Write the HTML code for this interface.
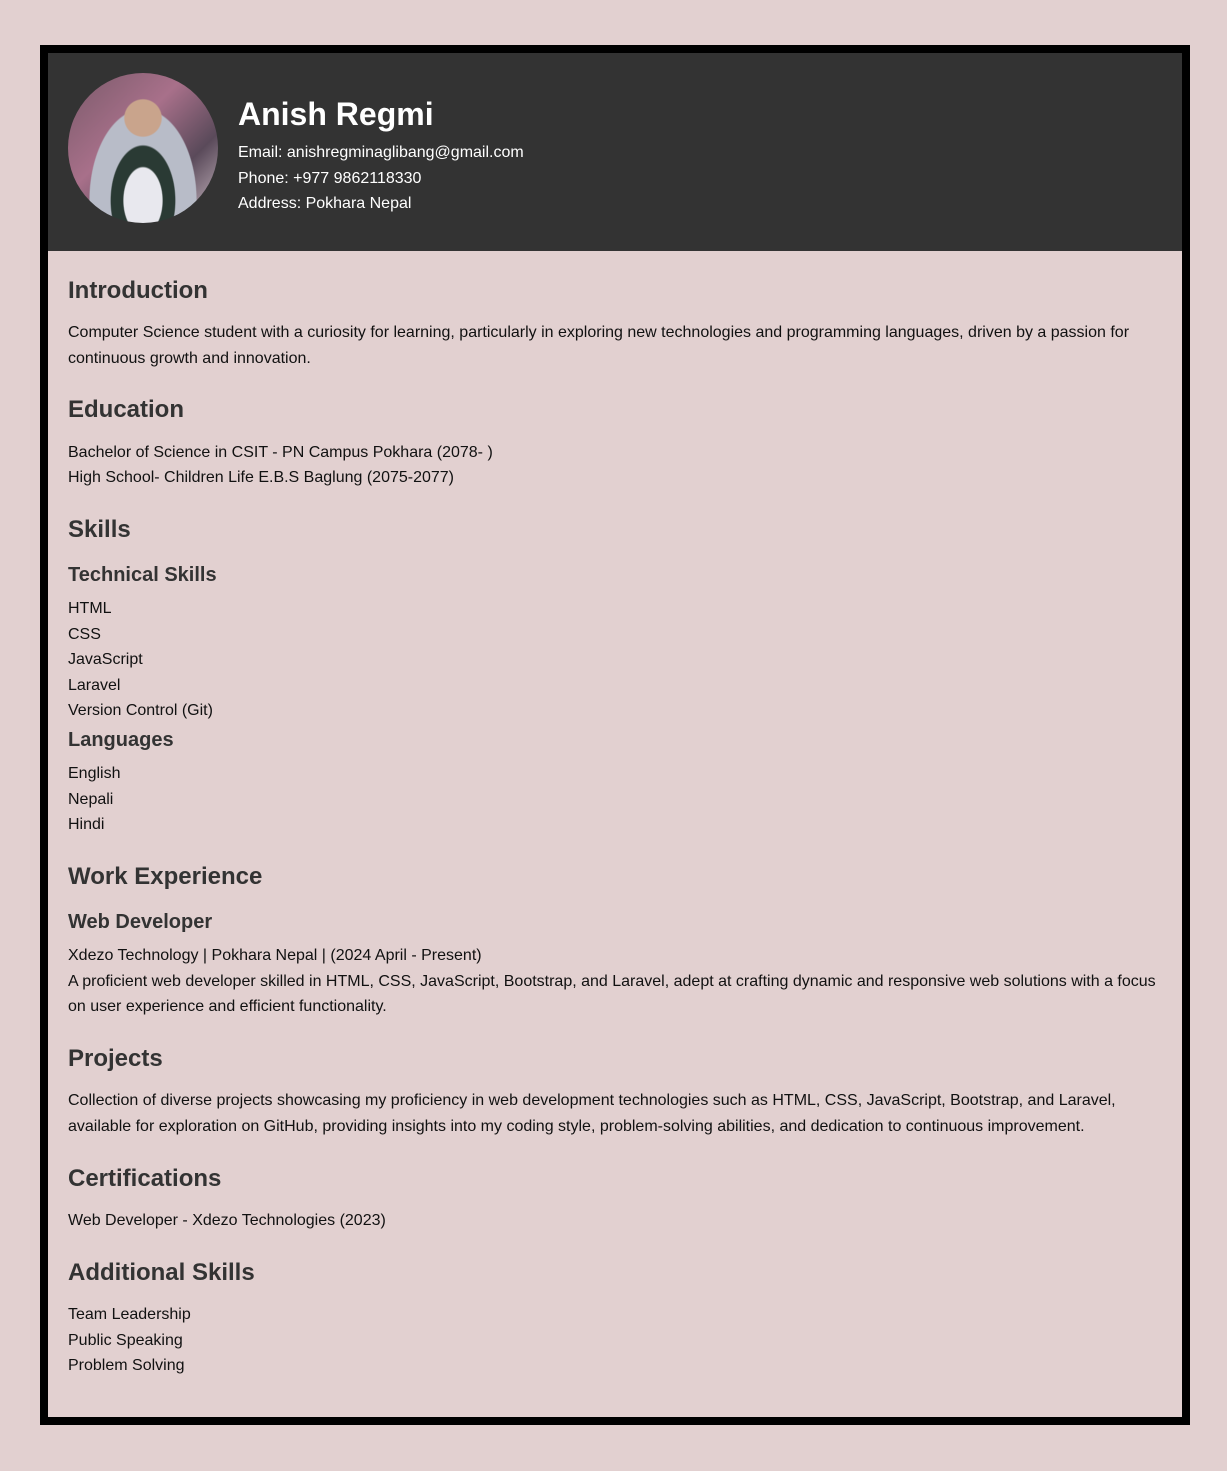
<!DOCTYPE html>
<html><head><meta charset="utf-8"><style>
html,body{margin:0;padding:0}
body{width:1227px;height:1471px;background:#e2d0d0;position:relative;font-family:"Liberation Sans",Arial,sans-serif;overflow:hidden}
.box{position:absolute;left:40px;top:45px;width:1134px;height:1364px;border:8px solid #000;}
.hdr{position:absolute;left:48px;top:53px;width:1134px;height:198px;background:#333}
.av{position:absolute;left:68px;top:73px;width:150px;height:150px;border-radius:50%;overflow:hidden;
background:radial-gradient(circle at 50% 30%,#c9a48c 0 14%,transparent 15%),radial-gradient(ellipse at 50% 85%,#e8e8ee 0 18%,#2a3a34 19% 30%,#b8bcc8 31% 50%,transparent 51%),linear-gradient(135deg,#7a5a6a,#a8708a 40%,#5a4a5a 70%,#d0c0c8)}
.a{position:absolute;left:68px;white-space:nowrap}
.h2{font-size:24px;line-height:28px;font-weight:bold;color:#333}
.h3{font-size:20px;line-height:24px;font-weight:bold;color:#333}
.p{font-size:16px;line-height:25.6px;color:#111}
.w{color:#fff;font-size:16px;line-height:25.5px;left:238px}
</style></head><body>
<div class="box"></div>
<div class="hdr"></div>
<div class="av"></div>
<div class="a" style="left:238px;top:96px;font-size:32px;line-height:36px;font-weight:bold;color:#fff">Anish Regmi</div>
<div class="a w" style="top:140px">Email: anishregminaglibang@gmail.com<br>Phone: +977 9862118330<br>Address: Pokhara Nepal</div>

<div class="a h2" style="top:277px">Introduction</div>
<div class="a p" style="top:320px">Computer Science student with a curiosity for learning, particularly in exploring new technologies and programming languages, driven by a passion for<br>continuous growth and innovation.</div>
<div class="a h2" style="top:396px">Education</div>
<div class="a p" style="top:440px;line-height:25px">Bachelor of Science in CSIT - PN Campus Pokhara (2078- )<br>High School- Children Life E.B.S Baglung (2075-2077)</div>
<div class="a h2" style="top:516px">Skills</div>
<div class="a h3" style="top:563px">Technical Skills</div>
<div class="a p" style="top:596px">HTML<br>CSS<br>JavaScript<br>Laravel<br>Version Control (Git)</div>
<div class="a h3" style="top:728px">Languages</div>
<div class="a p" style="top:761px">English<br>Nepali<br>Hindi</div>
<div class="a h2" style="top:863px">Work Experience</div>
<div class="a h3" style="top:910px">Web Developer</div>
<div class="a p" style="top:943px">Xdezo Technology | Pokhara Nepal | (2024 April - Present)<br>A proficient web developer skilled in HTML, CSS, JavaScript, Bootstrap, and Laravel, adept at crafting dynamic and responsive web solutions with a focus<br>on user experience and efficient functionality.</div>
<div class="a h2" style="top:1045px">Projects</div>
<div class="a p" style="top:1088px">Collection of diverse projects showcasing my proficiency in web development technologies such as HTML, CSS, JavaScript, Bootstrap, and Laravel,<br>available for exploration on GitHub, providing insights into my coding style, problem-solving abilities, and dedication to continuous improvement.</div>
<div class="a h2" style="top:1165px">Certifications</div>
<div class="a p" style="top:1208px">Web Developer - Xdezo Technologies (2023)</div>
<div class="a h2" style="top:1259px">Additional Skills</div>
<div class="a p" style="top:1302px">Team Leadership<br>Public Speaking<br>Problem Solving</div>
</body></html>
